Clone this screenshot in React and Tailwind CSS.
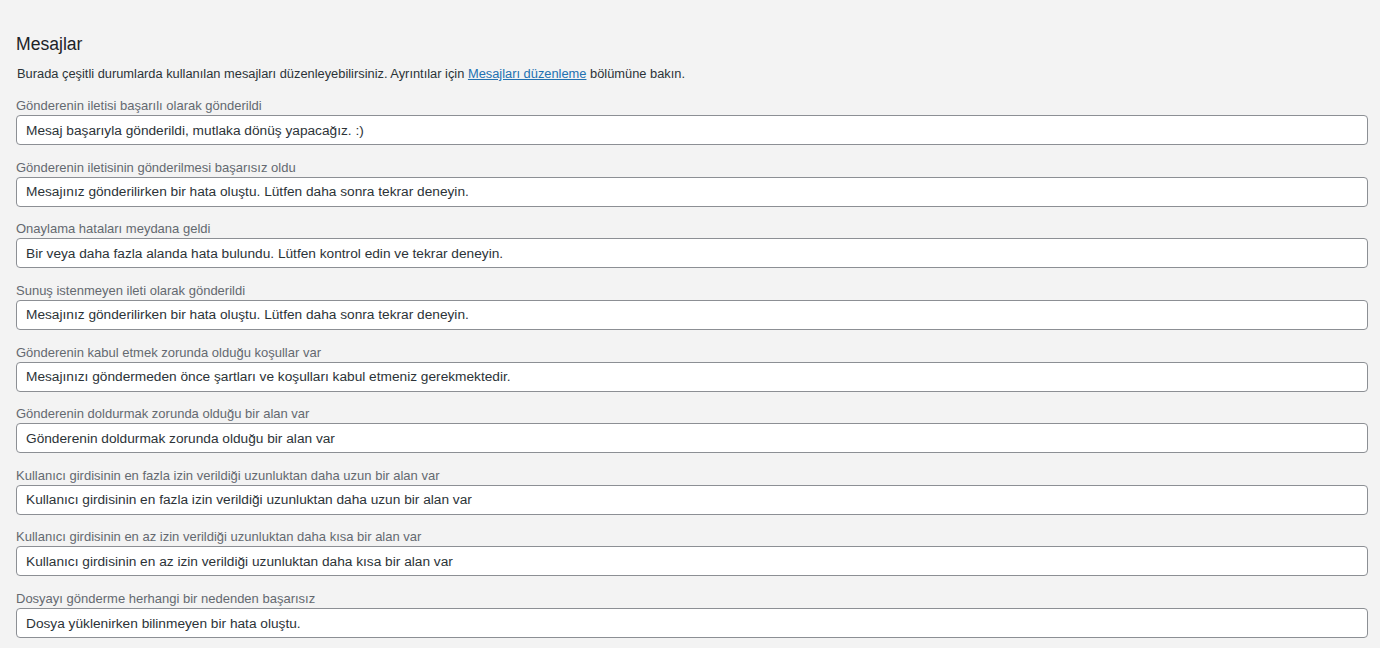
import React from "react";

const rows = [
  ["Gönderenin iletisi başarılı olarak gönderildi", "Mesaj başarıyla gönderildi, mutlaka dönüş yapacağız. :)"],
  ["Gönderenin iletisinin gönderilmesi başarısız oldu", "Mesajınız gönderilirken bir hata oluştu. Lütfen daha sonra tekrar deneyin."],
  ["Onaylama hataları meydana geldi", "Bir veya daha fazla alanda hata bulundu. Lütfen kontrol edin ve tekrar deneyin."],
  ["Sunuş istenmeyen ileti olarak gönderildi", "Mesajınız gönderilirken bir hata oluştu. Lütfen daha sonra tekrar deneyin."],
  ["Gönderenin kabul etmek zorunda olduğu koşullar var", "Mesajınızı göndermeden önce şartları ve koşulları kabul etmeniz gerekmektedir."],
  ["Gönderenin doldurmak zorunda olduğu bir alan var", "Gönderenin doldurmak zorunda olduğu bir alan var"],
  ["Kullanıcı girdisinin en fazla izin verildiği uzunluktan daha uzun bir alan var", "Kullanıcı girdisinin en fazla izin verildiği uzunluktan daha uzun bir alan var"],
  ["Kullanıcı girdisinin en az izin verildiği uzunluktan daha kısa bir alan var", "Kullanıcı girdisinin en az izin verildiği uzunluktan daha kısa bir alan var"],
  ["Dosyayı gönderme herhangi bir nedenden başarısız", "Dosya yüklenirken bilinmeyen bir hata oluştu."],
];

export default function App() {
  return (
    <div
      className="min-h-screen bg-[#f3f3f3] pl-4 pr-3 pt-[33px] text-[#2c3338]"
      style={{ fontFamily: '"Liberation Sans", Arial, sans-serif' }}
    >
      <h2 className="text-[17.6px] leading-[23px] text-[#1d2327] font-normal">Mesajlar</h2>
      <p className="mt-[8px] ml-[1px] text-[12.85px] leading-[20px] text-[#2c3338]">
        Burada çeşitli durumlarda kullanılan mesajları düzenleyebilirsiniz. Ayrıntılar için{" "}
        <a href="#" className="text-[#2271b1] underline">Mesajları düzenleme</a> bölümüne bakın.
      </p>
      <div className="mt-[14px] flex flex-col gap-[14.625px]">
        {rows.map(([label, value], i) => (
          <div key={i} className="flex flex-col">
            <label className="text-[13px] leading-[16px] text-[#646970]">{label}</label>
            <input
              type="text"
              defaultValue={value}
              className="mt-[1px] h-[30px] w-full rounded-[4px] border border-[#8c8f94] bg-white px-[9px] text-[13.7px] text-[#2c3338] outline-none"
              style={{ fontFamily: '"Liberation Sans", Arial, sans-serif' }}
            />
          </div>
        ))}
      </div>
    </div>
  );
}
